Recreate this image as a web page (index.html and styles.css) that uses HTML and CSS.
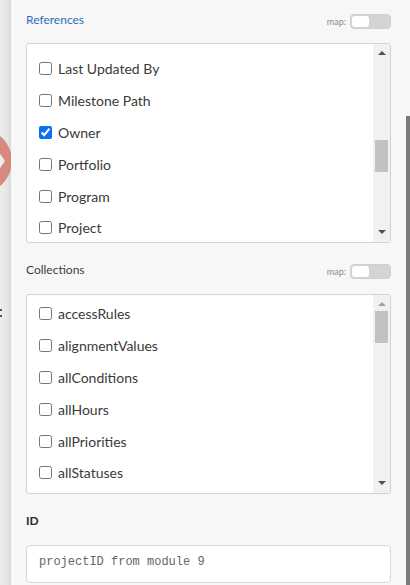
FILE: index.html
```html
<!DOCTYPE html>
<html>
<head>
<meta charset="utf-8">
<link rel="stylesheet" href="styles.css">
</head>
<body>
<div class="canvas">
  <div class="module"><span class="notch"></span></div>
  <span class="dots"><i></i><i></i></span>
</div>
<main class="panel">
  <div class="field-head">
    <span class="title title-link">References</span>
    <span class="map"><span class="map-label">map:</span><span class="toggle"><span class="knob"></span></span></span>
  </div>
  <div class="listbox">
    <ul class="items items-refs">
      <li><label><input type="checkbox"> Last Updated By</label></li>
      <li><label><input type="checkbox"> Milestone Path</label></li>
      <li><label><input type="checkbox" checked> Owner</label></li>
      <li><label><input type="checkbox"> Portfolio</label></li>
      <li><label><input type="checkbox"> Program</label></li>
      <li><label><input type="checkbox"> Project</label></li>
    </ul>
    <div class="scrollbar">
      <span class="arrow up"></span>
      <div class="track track-refs"><span class="thumb"></span></div>
      <span class="arrow down"></span>
    </div>
  </div>

  <div class="field-head second">
    <span class="title">Collections</span>
    <span class="map"><span class="map-label">map:</span><span class="toggle"><span class="knob"></span></span></span>
  </div>
  <div class="listbox">
    <ul class="items items-cols">
      <li><label><input type="checkbox"> accessRules</label></li>
      <li><label><input type="checkbox"> alignmentValues</label></li>
      <li><label><input type="checkbox"> allConditions</label></li>
      <li><label><input type="checkbox"> allHours</label></li>
      <li><label><input type="checkbox"> allPriorities</label></li>
      <li><label><input type="checkbox"> allStatuses</label></li>
    </ul>
    <div class="scrollbar">
      <span class="arrow up light"></span>
      <div class="track track-cols"><span class="thumb"></span></div>
      <span class="arrow down"></span>
    </div>
  </div>

  <div class="id-label">ID</div>
  <div class="id-input">projectID from module 9</div>
</main>
<div class="page-scroll"><span class="page-thumb"></span></div>
</body>
</html>
```
FILE: styles.css
```css
html, body {
  margin: 0;
  padding: 0;
}
body {
  width: 410px;
  height: 585px;
  overflow: hidden;
  display: flex;
  font-family: Lato, "Open Sans", sans-serif;
  background: #f7f7f7;
}
.canvas {
  width: 11px;
  flex: none;
  position: relative;
  overflow: hidden;
  background: linear-gradient(to right, #ececec 0, #e6e6e6 7px, #dcdcdc 10px, #d4d4d4 11px);
}
.module {
  position: absolute;
  left: -52px;
  top: 129px;
  width: 64px;
  height: 64px;
  border-radius: 50%;
  background: #d68a7f;
}
.notch {
  position: absolute;
  left: 50px;
  top: 22px;
  width: 0;
  height: 0;
  border-top: 10px solid transparent;
  border-bottom: 10px solid transparent;
  border-left: 7px solid #ececec;
}
.dots {
  position: absolute;
  left: 0;
  top: 309px;
  display: flex;
  flex-direction: column;
  gap: 4px;
}
.dots i {
  display: block;
  width: 2px;
  height: 2px;
  background: #555;
}
.panel {
  flex: 1;
  padding: 13px 15px 0 15px;
  box-shadow: -1px 0 2px rgba(0,0,0,0.08);
}
.field-head {
  display: flex;
  align-items: center;
  justify-content: space-between;
  height: 16px;
  margin-bottom: 14px;
}
.field-head.second {
  margin-top: 20px;
  margin-bottom: 15px;
}
.title {
  font-size: 12px;
  color: #404040;
  line-height: 14px;
  margin-top: -3px;
}
.title-link {
  color: #2d6cb8;
}
.map {
  display: flex;
  align-items: center;
  gap: 4px;
}
.map-label {
  font-size: 9px;
  color: #8a8a8a;
}
.toggle {
  width: 38px;
  height: 13px;
  border: 1px solid #cfcfcf;
  border-radius: 4px;
  background: #d4d4d4;
  display: flex;
  align-items: center;
  padding-left: 1px;
}
.knob {
  width: 17px;
  height: 11px;
  border-radius: 3px;
  background: #ffffff;
}
.listbox {
  height: 198px;
  border: 1px solid #d3d3d3;
  border-radius: 3px;
  background: #ffffff;
  display: flex;
  overflow: hidden;
}
.items {
  list-style: none;
  margin: 0;
  padding: 0 0 0 12px;
  flex: 1;
  overflow: hidden;
}
.items-refs { padding-top: 9px; }
.items-cols { padding-top: 3px; }
.items li {
  height: 31.8px;
  display: flex;
  align-items: center;
}
.items label {
  display: flex;
  align-items: center;
  gap: 6px;
  font-size: 14px;
  color: #3a3a3a;
}
.items input {
  margin: 0;
  width: 13px;
  height: 13px;
  accent-color: #0b6ff5;
}
.scrollbar {
  width: 17px;
  flex: none;
  background: #f1f1f1;
  display: flex;
  flex-direction: column;
  align-items: center;
}
.arrow {
  width: 0;
  height: 0;
  border-left: 4px solid transparent;
  border-right: 4px solid transparent;
}
.arrow.up {
  border-bottom: 4px solid #505050;
  margin-top: 7px;
}
.arrow.up.light {
  border-bottom-color: #a3a3a3;
}
.arrow.down {
  border-top: 4px solid #505050;
  margin-bottom: 8px;
}
.track {
  flex: 1;
  width: 13px;
}
.track-refs { padding-top: 85px; }
.track-cols { padding-top: 5px; }
.thumb {
  display: block;
  width: 13px;
  height: 32px;
  background: #c1c1c1;
}
.id-label {
  margin-top: 20px;
  font-size: 12px;
  font-weight: bold;
  color: #2c2c2c;
  line-height: 14px;
  margin-bottom: 17px;
}
.id-input {
  height: 38px;
  box-sizing: border-box;
  border: 1px solid #d8d8d8;
  border-radius: 4px;
  background: #ffffff;
  padding: 9px 12px 0 12px;
  font-family: "Liberation Mono", monospace;
  font-size: 12px;
  line-height: 14px;
  color: #666666;
}
.page-scroll {
  width: 4px;
  flex: none;
  padding-top: 116px;
  background: #f7f7f7;
}
.page-thumb {
  display: block;
  height: 469px;
  background: #7a7a7a;
}
```
